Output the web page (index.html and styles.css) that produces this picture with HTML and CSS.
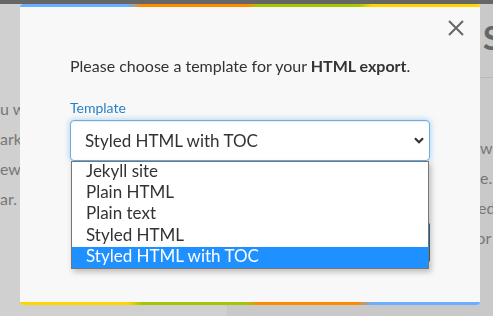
FILE: index.html
```html
<!DOCTYPE html>
<html lang="en">

<head>
    <meta charset="UTF-8">
    <meta name="viewport" content="width=device-width, initial-scale=1.0">
    <title>Export to HTML</title>
    <link rel="stylesheet" href="styles.css">
</head>

<body>
    <div class="app">
        <div class="topbar"></div>
        <div class="panes">
            <div class="pane editor">
                <div class="line">u want to</div>
                <div class="line">arkdown</div>
                <div class="line">ew it</div>
                <div class="line">ar.</div>
            </div>
            <div class="pane preview">
                <h2 class="preview-title">S</h2>
                <hr class="preview-rule">
                <div class="preview-text">
                    <div class="line">own</div>
                    <div class="line">ne.</div>
                    <div class="line">sed</div>
                    <div class="line">for</div>
                </div>
            </div>
        </div>
    </div>

    <!-- Modal -->
    <div class="overlay">
        <div class="modal">
            <div class="modal-body">
                <button class="close" aria-label="Close">
                    <svg width="16" height="16" viewBox="0 0 16 16">
                        <path d="M1 1 L15 15 M15 1 L1 15" stroke="#666" stroke-width="2" fill="none" />
                    </svg>
                </button>
                <p class="lead">Please choose a template for your <b>HTML export</b>.</p>
                <label class="field-label">Template</label>
                <div class="select-wrap">
                    <div class="select">
                        <span>Styled HTML with TOC</span>
                        <svg class="chevron" width="10" height="7" viewBox="0 0 10 7">
                            <path d="M1 1.2 L5 5.2 L9 1.2" stroke="#333" stroke-width="2.2" fill="none" />
                        </svg>
                    </div>
                    <ul class="options">
                        <li>Jekyll site</li>
                        <li>Plain HTML</li>
                        <li>Plain text</li>
                        <li>Styled HTML</li>
                        <li class="selected">Styled HTML with TOC</li>
                    </ul>
                </div>
                <div class="footer">
                    <button class="btn-primary">Ok</button>
                </div>
            </div>
        </div>
    </div>
</body>

</html>
```

FILE: styles.css
```css
html,
body {
    margin: 0;
    height: 100%;
}

body {
    font-family: 'Lato', 'Liberation Sans', sans-serif;
    background-color: #c9c9c9;
    overflow: hidden;
}

/* Page behind the modal */
.app {
    display: flex;
    flex-direction: column;
    height: 100vh;
}

.topbar {
    height: 4px;
    background-color: #666;
}

.panes {
    flex: 1;
    display: grid;
    grid-template-columns: 227px 1fr;
}

.pane {
    color: #777;
    font-size: 16px;
    line-height: 30px;
    white-space: nowrap;
    overflow: hidden;
}

.editor {
    background-color: #d0d0d0;
    padding-top: 90px;
}

.preview {
    background-color: #c9c9c9;
    padding-top: 16px;
}

.preview-title {
    margin: 0;
    padding-left: 256px;
    font-size: 32px;
    line-height: 35px;
    font-weight: bold;
    color: #666;
}

.preview-rule {
    margin: 22px 0 0;
    border: none;
    border-top: 1px solid #b8b8b8;
}

.preview-text {
    margin-top: 55px;
    padding-left: 244px;
}

/* Modal */
.overlay {
    position: fixed;
    top: 0;
    left: 0;
    right: 0;
    bottom: 0;
    display: flex;
    align-items: flex-start;
    padding: 4px 0 0 20px;
}

.modal {
    width: 460px;
    height: 301px;
    background-color: #f8f8f8;
    border-radius: 3px;
    overflow: hidden;
    display: flex;
    flex-direction: column;
}

.modal::before,
.modal::after {
    content: "";
    height: 3px;
    flex: none;
}

.modal::before {
    background: linear-gradient(to right, #6aafff 0 23.5%, #ff8a00 26.5% 49%, #a6c700 52% 73.5%, #ffd400 76.5%);
}

.modal::after {
    background: linear-gradient(to right, #ffd400 0 23.5%, #a6c700 26.5% 49%, #ff8a00 52% 73.5%, #6aafff 76.5%);
}

.modal-body {
    flex: 1;
    position: relative;
    padding: 0 50px;
    color: #333;
}

.close {
    position: absolute;
    top: 13px;
    right: 16px;
    padding: 0;
    border: none;
    background: none;
    line-height: 0;
    cursor: pointer;
}

.lead {
    margin: 48px 0 0;
    font-size: 16px;
    line-height: 22px;
}

.field-label {
    display: block;
    margin: 21px 0 2px;
    font-size: 14px;
    line-height: 20px;
    color: #2a80c4;
}

.select-wrap {
    position: relative;
}

.select {
    height: 41px;
    box-sizing: border-box;
    display: flex;
    align-items: center;
    justify-content: space-between;
    padding: 0 5px 0 14px;
    background-color: #fff;
    border: 1px solid #66afe9;
    border-radius: 4px;
    box-shadow: inset 0 1px 1px rgba(0, 0, 0, 0.075), 0 0 6px rgba(102, 175, 233, 0.6);
    font-size: 17px;
    color: #333;
}

.options {
    position: absolute;
    top: 41px;
    left: 1px;
    right: 1px;
    z-index: 2;
    margin: 0;
    padding: 0;
    list-style: none;
    background-color: #fff;
    border: 1px solid #767676;
    box-shadow: 2px 3px 6px rgba(0, 0, 0, 0.25);
}

.options li {
    height: 21.2px;
    line-height: 18px;
    padding-left: 14px;
    font-size: 17px;
    color: #333;
}

.options li.selected {
    background-color: #1e90ff;
    color: #fff;
}

.footer {
    display: flex;
    justify-content: flex-end;
    margin-top: 61px;
}

.btn-primary {
    height: 41px;
    width: 90px;
    background-color: #2d8ad8;
    border: 1px solid #2471b3;
    border-radius: 3px;
    color: #fff;
    font-family: inherit;
    font-size: 16px;
}
```
